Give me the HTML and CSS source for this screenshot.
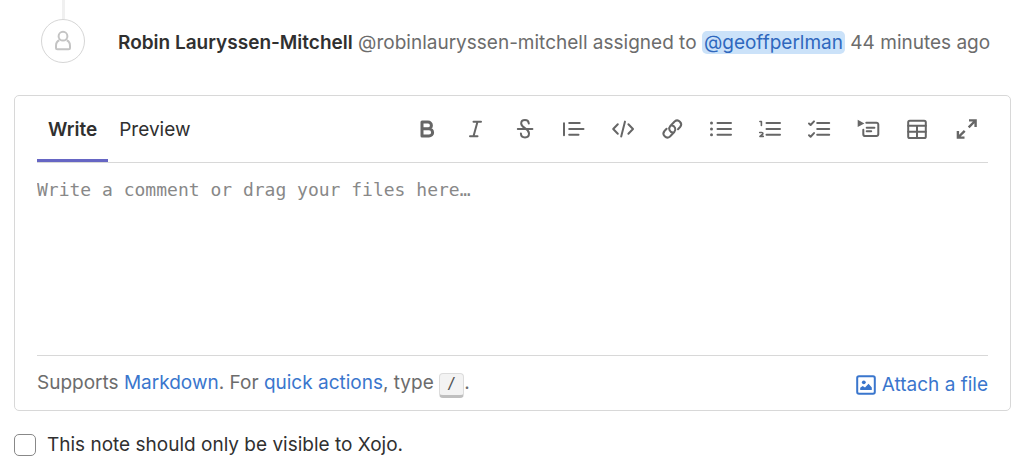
FILE: index.html
```html
<!DOCTYPE html>
<html lang="en">
<head>
<meta charset="utf-8">
<meta name="viewport" content="width=device-width, initial-scale=1">
<title>Issue comments</title>
<link rel="stylesheet" href="styles.css">
</head>
<body>
<main class="thread">
  <article class="note">
    <div class="note-rail">
      <span class="note-avatar">
        <svg class="person" viewBox="0 0 20 22" aria-hidden="true"><circle cx="10" cy="6.200" r="4.400"/><path d="M6.300 10.200C4 11 3 13.200 3 16v1.800A1.500 1.500 0 0 0 4.500 19.300h11a1.500 1.500 0 0 0 1.500-1.500V16c0-2.800-1-5-3.300-5.800"/></svg>
      </span>
    </div>
    <p class="note-text"><strong class="author">Robin Lauryssen-Mitchell</strong> @robinlauryssen-mitchell assigned to <a class="mention" href="#geoffperlman">@geoffperlman</a> 44 minutes ago</p>
  </article>

  <form class="comment-form">
    <section class="editor">
      <header class="editor-header">
        <div class="tabs">
          <button class="tab tab-active" type="button">Write</button>
          <button class="tab" type="button">Preview</button>
        </div>
        <div class="toolbar">
          <button class="tool" type="button" aria-label="Bold"><svg class="icon heavy" viewBox="0 0 22 22"><path d="M6 4h6a3.300 3.300 0 0 1 0 6.800H6zM6 10.800h7a3.500 3.500 0 0 1 0 7.200H6z"/></svg></button>
          <button class="tool" type="button" aria-label="Italic"><svg class="icon" viewBox="0 0 22 22"><path d="M8.500 3.700h7.500M5 18.300h7.500M12.500 3.700l-4 14.600"/></svg></button>
          <button class="tool" type="button" aria-label="Strikethrough"><svg class="icon" viewBox="0 0 22 22"><path d="M3.800 11h14.600M14.800 5.500C14.600 3.300 13 2.100 11 2.100c-2.200 0-3.800 1.300-3.800 3.400 0 4.900 7.800 4.500 7.800 10 0 2.300-1.700 3.900-4 3.900s-4-1.500-4.100-3.900"/></svg></button>
          <button class="tool" type="button" aria-label="Quote"><svg class="icon" viewBox="0 0 22 22"><path d="M1 5.200v12M6.200 5h10.500M6.200 11h14.300M6.200 16.800h9.300"/></svg></button>
          <button class="tool" type="button" aria-label="Code"><svg class="icon" viewBox="0 0 22 22"><path d="M5.800 6.300L1.200 11l4.600 4.700M16.400 6.300L21 11l-4.600 4.700M13 3.600L9.200 18.600"/></svg></button>
          <button class="tool" type="button" aria-label="Link"><svg class="icon" viewBox="0 0 22 22"><path d="M11.900 14.400a3.800 3.800 0 0 1-2.600-6.400l4.300-4.500a3.900 3.900 0 0 1 5.500 5.500l-2.100 2.200M10.700 7.600a3.800 3.800 0 0 1 2.600 6.400L9 18.500A3.900 3.900 0 0 1 3.500 13l2.100-2.200"/></svg></button>
          <button class="tool" type="button" aria-label="Bulleted list"><svg class="icon" viewBox="0 0 22 22"><path d="M7.500 5h13.500M7.500 10.900h13.500M7.500 16.800h13.500"/><g class="solid"><circle cx="1.500" cy="5" r="1.500"/><circle cx="1.500" cy="10.900" r="1.500"/><circle cx="1.500" cy="16.800" r="1.500"/></g></svg></button>
          <button class="tool" type="button" aria-label="Numbered list"><svg class="icon" viewBox="0 0 22 22"><path d="M7.500 5h13.500M7.500 10.900h13.500M7.500 16.800h13.500"/><path class="fine" d="M.900 3.500h1.500v4M.700 14.500h2c1.500 0 1.500 1.700.3 2.200L1 18.400h3.300"/></svg></button>
          <button class="tool" type="button" aria-label="Task list"><svg class="icon" viewBox="0 0 22 22"><path d="M9.200 5h12M9.200 10.900h12M9.200 16.800h12M1 5.500l1.600 1.500L6 3.400M1 17.200l1.600 1.500L6 15.100"/></svg></button>
          <button class="tool" type="button" aria-label="Collapsible section"><svg class="icon" viewBox="0 0 22 22"><path d="M9.300 4.700h10.200a1.800 1.800 0 0 1 1.800 1.800v9.800a1.800 1.800 0 0 1-1.800 1.800H8.100a1.800 1.800 0 0 1-1.800-1.800V11.800M9.700 9.700h7.700M9.700 13.200h4.500"/><path class="solid" d="M.700 1.800L7.400 5.400.700 9z"/></svg></button>
          <button class="tool" type="button" aria-label="Table"><svg class="icon" viewBox="0 0 22 22"><rect x="2.200" y="2.700" width="17.600" height="17.300" rx="1.600"/><path d="M2.200 7.700h17.600M2.200 13.700h17.600M11 7.700V20"/></svg></button>
          <button class="tool" type="button" aria-label="Full screen"><svg class="icon square" viewBox="0 0 22 22"><path d="M14 2.400h6.600v6.600M20 3l-6.300 6.300M2.900 13v6.600h6.600M3.500 19l6.200-6.200"/></svg></button>
        </div>
      </header>
      <textarea class="comment-input" aria-label="Comment" placeholder="Write a comment or drag your files here…"></textarea>
      <footer class="editor-footer">
        <p class="hint">Supports <a class="link" href="#markdown">Markdown</a>. For <a class="link" href="#quick-actions">quick actions</a>, type <kbd class="key">/</kbd>.</p>
        <button class="attach" type="button"><svg class="attach-icon" viewBox="0 0 20 20" aria-hidden="true"><rect x="1.200" y="1.200" width="17.600" height="17.600" rx="1.800"/><g class="solid"><circle cx="7.800" cy="7.300" r="1.900"/><path d="M4.200 15v-2.300l2.500-1.700 2.300 1.400 3.500-3.600 3.300 3.600V15z"/></g></svg>Attach a file</button>
      </footer>
    </section>
    <label class="visibility"><input class="checkbox" type="checkbox">This note should only be visible to Xojo.</label>
  </form>
</main>
</body>
</html>
```

FILE: styles.css
```css
* {
  box-sizing: border-box;
}

body {
  margin: 0;
  background: #fff;
  color: #303030;
  font: 19px/24px Inter, "Liberation Sans", sans-serif;
}

p {
  margin: 0;
}

a {
  text-decoration: none;
}

button {
  padding: 0;
  border: 0;
  background: none;
  color: inherit;
  font: inherit;
}

.thread {
  padding: 0 13px 0 14px;
}

.note {
  display: flex;
  gap: 33px;
  padding-left: 27px;
}

.note-rail {
  display: flex;
  flex-direction: column;
  align-items: center;
}

.note-rail::before {
  content: "";
  width: 3px;
  height: 19px;
  background: #f0f0f0;
}

.note-avatar {
  display: flex;
  align-items: center;
  justify-content: center;
  width: 44px;
  height: 44px;
  border: 1px solid #d6d6d6;
  border-radius: 50%;
}

.person {
  width: 20px;
  height: 22px;
  fill: none;
  stroke: #c4c4c4;
  stroke-width: 2;
  stroke-linejoin: round;
}

.note-text {
  padding-top: 31px;
  color: #6c6c6c;
}

.author {
  color: #303030;
  font-weight: 600;
}

.mention {
  padding: 0 2px;
  border-radius: 5px;
  background: #cbe2f9;
  color: #2f68be;
}

.editor {
  margin-top: 32px;
  padding: 0 22px;
  border: 1px solid #d8d8d8;
  border-radius: 5px;
}

.editor-header {
  display: flex;
  justify-content: space-between;
  border-bottom: 1px solid #d8d8d8;
}

.tabs {
  display: flex;
}

.tab {
  height: 66px;
  padding: 4px 11px 0;
  border-bottom: 3px solid transparent;
}

.tab-active {
  border-bottom-color: #6666c4;
  font-weight: 600;
}

.toolbar {
  display: flex;
  align-items: center;
  gap: 5px;
}

.tool {
  display: flex;
  align-items: center;
  justify-content: center;
  width: 44px;
  height: 44px;
}

.icon {
  width: 22px;
  height: 22px;
  overflow: visible;
  fill: none;
  stroke: #666;
  stroke-width: 2;
  stroke-linecap: round;
  stroke-linejoin: round;
}

.heavy {
  stroke-width: 3;
}

.square {
  stroke-width: 2.4;
  stroke-linecap: butt;
  stroke-linejoin: miter;
}

.fine {
  stroke-width: 1.6;
}

.icon .solid {
  fill: #666;
  stroke: none;
}

.comment-input {
  display: block;
  width: 100%;
  height: 192px;
  padding: 15px 0;
  border: 0;
  outline: 0;
  resize: none;
  color: #303030;
  font: 18px/24px "DejaVu Sans Mono", monospace;
}

.comment-input::placeholder {
  color: #888;
  opacity: 1;
}

.editor-footer {
  display: flex;
  align-items: center;
  justify-content: space-between;
  height: 55px;
  padding-top: 3px;
  border-top: 1px solid #d8d8d8;
  color: #6c6c6c;
}

.link {
  color: #3a76cd;
}

.key {
  display: inline-block;
  padding: 0 7px;
  border: 1px solid #dcdcdc;
  border-bottom: 3px solid #bfbfbf;
  border-radius: 4px;
  background: #f3f3f3;
  color: #505050;
  font: 15px/21px "DejaVu Sans Mono", monospace;
}

.attach {
  display: flex;
  align-items: center;
  gap: 6px;
  color: #3a76cd;
}

.attach-icon {
  width: 20px;
  height: 20px;
  fill: none;
  stroke: #3a76cd;
  stroke-width: 2;
}

.attach-icon .solid {
  fill: #3a76cd;
  stroke: none;
}

.visibility {
  display: flex;
  align-items: center;
  gap: 11px;
  margin-top: 22px;
}

.checkbox {
  appearance: none;
  width: 22px;
  height: 22px;
  margin: 0;
  border: 1px solid #888;
  border-radius: 5px;
  background: #fff;
}
```
